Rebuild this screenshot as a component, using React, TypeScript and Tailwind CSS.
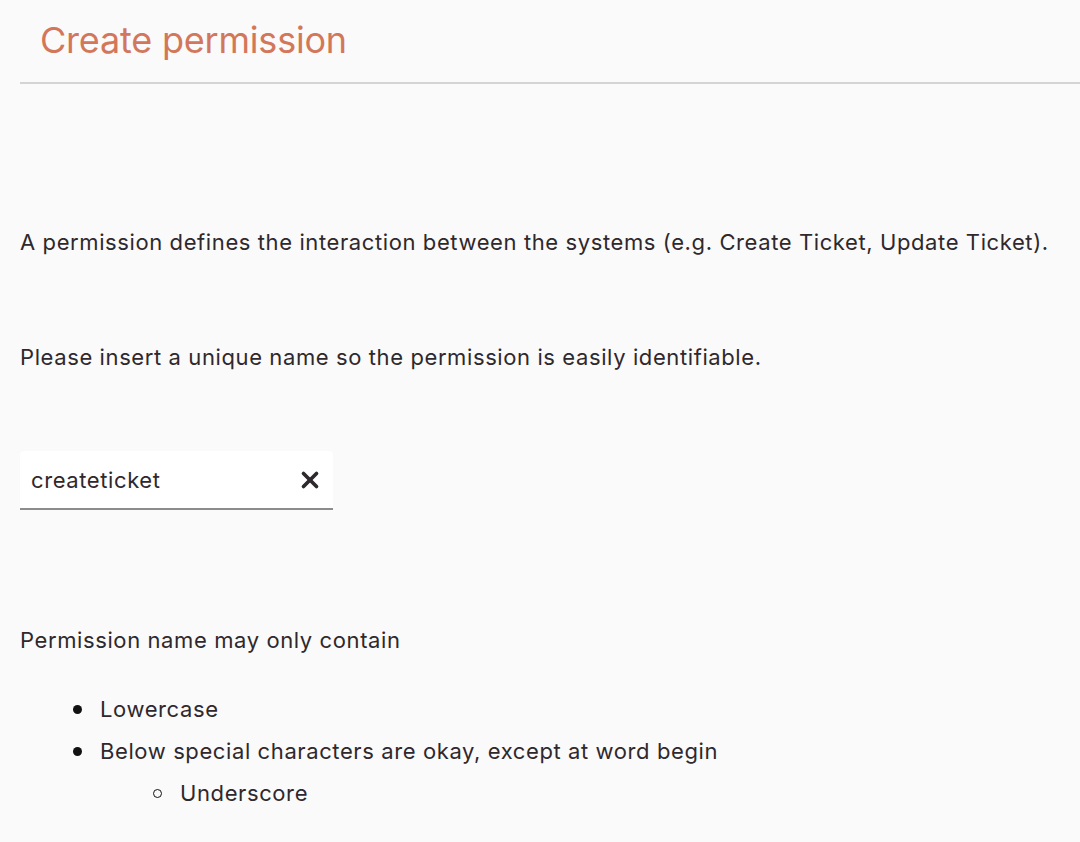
import { X } from "lucide-react";

function Bullet({ hollow = false }: { hollow?: boolean }) {
  return (
    <span
      className={
        hollow
          ? "inline-block h-[9px] w-[9px] shrink-0 rounded-full border-[1.5px] border-[#111]"
          : "inline-block h-[9px] w-[9px] shrink-0 rounded-full bg-[#111]"
      }
    />
  );
}

export default function App() {
  return (
    <div
      className="min-h-[842px] w-[1080px] bg-[#fafafa] text-[#2f282c] overflow-hidden"
      style={{ fontFamily: "Inter, 'Noto Sans', sans-serif" }}
    >
      {/* Header */}
      <div className="ml-5 border-b-2 border-[#d4d4d4] pl-5 pt-4 pb-[18px]">
        <h1 className="text-[36px] leading-[48px] text-[#d2775a] font-normal tracking-[-0.2px]">
          Create permission
        </h1>
      </div>

      <div className="px-5 text-[22px] leading-[30px] tracking-[0.6px]">
        <p className="mt-[143px] whitespace-nowrap">
          A permission defines the interaction between the systems (e.g. Create Ticket, Update Ticket).
        </p>
        <p className="mt-[85px]">
          Please insert a unique name so the permission is easily identifiable.
        </p>

        {/* Input */}
        <div className="mt-[79px] flex h-[59px] w-[313px] items-center justify-between rounded-t-[4px] border-b-2 border-[#8c8c8c] bg-white pl-[11px] pr-[10px]">
          <span>createticket</span>
          <X className="h-[26px] w-[26px] text-[#2f282c]" strokeWidth={3.4} />
        </div>

        <p className="mt-[115px]">Permission name may only contain</p>
        <ul className="mt-[33px] flex flex-col">
          <li className="flex h-[42px] items-center gap-[18px] pl-[53px]">
            <Bullet />
            <span>Lowercase</span>
          </li>
          <li className="flex h-[42px] items-center gap-[18px] pl-[53px]">
            <Bullet />
            <span>Below special characters are okay, except at word begin</span>
          </li>
          <li className="flex h-[42px] items-center gap-[18px] pl-[133px]">
            <Bullet hollow />
            <span>Underscore</span>
          </li>
        </ul>
      </div>
    </div>
  );
}
